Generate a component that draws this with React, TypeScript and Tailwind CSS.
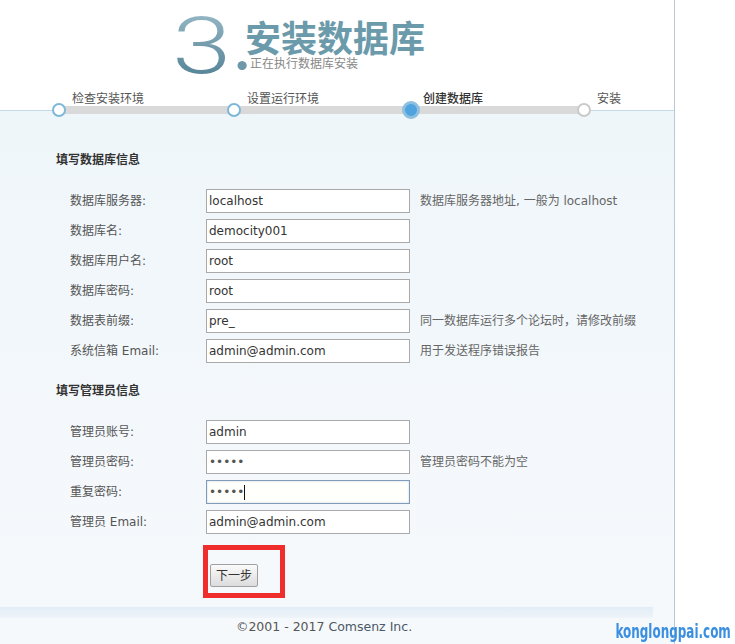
import React from "react";

const FONT = "font-['DejaVu_Sans','Noto_Sans_CJK_SC',sans-serif]";

type Row = { label: string; value: string; hint?: string; type?: "text" | "password" | "focus" };

const dbRows: Row[] = [
  { label: "数据库服务器:", value: "localhost", hint: "数据库服务器地址, 一般为 localhost" },
  { label: "数据库名:", value: "democity001" },
  { label: "数据库用户名:", value: "root" },
  { label: "数据库密码:", value: "root" },
  { label: "数据表前缀:", value: "pre_", hint: "同一数据库运行多个论坛时，请修改前缀" },
  { label: "系统信箱 Email:", value: "admin@admin.com", hint: "用于发送程序错误报告" },
];

const adminRows: Row[] = [
  { label: "管理员账号:", value: "admin" },
  { label: "管理员密码:", value: "•••••", hint: "管理员密码不能为空" },
  { label: "重复密码:", value: "•••••", type: "focus" },
  { label: "管理员 Email:", value: "admin@admin.com" },
];

function FormRow({ row }: { row: Row }) {
  const focused = row.type === "focus";
  return (
    <div className="flex items-start h-[30px]">
      <div className="w-[206px] pl-[70px] text-[12px] leading-[24px] text-[#555]">{row.label}</div>
      <div
        className={
          "w-[204px] h-[24px] border flex items-center pl-[2px] text-[12px] text-[#333] " +
          (focused
            ? "border-[#7f9dbb] shadow-[inset_0_0_2px_rgba(120,150,185,0.5)] bg-[#fffffb]"
            : "border-[#a9a9a9] bg-white")
        }
      >
        <span className={row.value.startsWith("•") ? "text-[#555]" : ""}>{row.value}</span>
        {focused && <span className="w-[1px] h-[15px] bg-[#111]" />}
      </div>
      {row.hint && <div className="ml-[10px] text-[12px] leading-[24px] text-[#666]">{row.hint}</div>}
    </div>
  );
}

function Step({
  label,
  width,
  kind,
}: {
  label: string;
  width: string;
  kind: "done" | "active" | "todo";
}) {
  return (
    <div className={"flex items-end " + width}>
      {kind === "active" ? (
        <div className="w-[18px] h-[18px] rounded-full border-[3px] border-[#8cc0de] bg-[#4fa3df] translate-y-[9px] shrink-0" />
      ) : kind === "done" ? (
        <div className="w-[14px] h-[14px] rounded-full border-2 border-[#7fb7d9] bg-white translate-y-[7px] shrink-0" />
      ) : (
        <div className="w-[14px] h-[14px] rounded-full border-2 border-[#cacaca] bg-white translate-y-[7px] shrink-0" />
      )}
      <div
        className={
          "mb-[3px] text-[12px] leading-[16px] whitespace-nowrap " +
          (kind === "active" ? "ml-[3px] text-[#333] font-medium" : "ml-[6px] text-[#555]")
        }
      >
        {label}
      </div>
    </div>
  );
}

export default function App() {
  return (
    <div className={"relative w-[735px] h-[644px] bg-white overflow-hidden " + FONT}>
      <div className="w-[675px] h-[644px] border-r border-[#b7cad6] flex flex-col">
        {/* header */}
        <div className="h-[111px] border-b border-[#c2d9e7] bg-white flex flex-col">
          <div className="h-[88px] flex pl-[172px]">
            <span className="w-[63px] pt-[2px] text-[80px] leading-[88px] font-light font-['Roboto',sans-serif] origin-left scale-x-[1.34] bg-gradient-to-b from-[#a2c1cd] to-[#4a7b90] bg-clip-text text-transparent">
              3
            </span>
            <span className="w-[10px] pt-[17px] text-[60px] leading-[60px] font-bold font-['Lato',sans-serif] text-[#6f97aa]">
              .
            </span>
            <div className="flex flex-col pt-[17px]">
              <div className="text-[36px] leading-[38px] font-bold font-['Noto_Sans_CJK_SC',sans-serif] text-[#6b9aab]">
                安装数据库
              </div>
              <div className="pl-[5px] mt-[1px] text-[12px] leading-[16px] text-[#888]">正在执行数据库安装</div>
            </div>
          </div>
          <div className="relative z-10 h-[22px]">
            <div className="absolute left-[59px] top-[18px] w-[525px] h-[8px] bg-[#d9d9d9]" />
            <div className="relative flex pl-[52px] h-full">
              <Step label="检查安装环境" width="w-[175px]" kind="done" />
              <Step label="设置运行环境" width="w-[175px]" kind="done" />
              <Step label="创建数据库" width="w-[175px]" kind="active" />
              <Step label="安装" width="w-[60px]" kind="todo" />
            </div>
          </div>
        </div>

        {/* form */}
        <div className="bg-gradient-to-b from-[#eff6fa] to-[#f6f9fc] pt-[39px]">
          <div className="pl-[56px] text-[12px] leading-[20px] font-bold text-[#333]">填写数据库信息</div>
          <div className="mt-[19px] flex flex-col">
            {dbRows.map((r) => (
              <FormRow key={r.label} row={r} />
            ))}
          </div>
          <div className="mt-[12px] pl-[56px] text-[12px] leading-[20px] font-bold text-[#333]">填写管理员信息</div>
          <div className="mt-[19px] flex flex-col">
            {adminRows.map((r) => (
              <FormRow key={r.label} row={r} />
            ))}
          </div>
          <div className="mt-[5px] pl-[203px] pb-[9px]">
            <div className="w-[82px] h-[53px] border-[5px] border-[#ef2d2d]">
              <button className="ml-[2px] mt-[14px] w-[48px] h-[23px] border border-[#a0a0a0] rounded-[2px] bg-gradient-to-b from-[#fbfbfb] to-[#dcdcdc] text-[12px] leading-[16px] text-[#333]">
                下一步
              </button>
            </div>
          </div>
        </div>

        {/* footer */}
        <div className="flex-1 bg-[#f6f9fc] flex flex-col">
          <div className="w-[653px] h-[11px] bg-gradient-to-b from-[#e3edf6] to-[#eef4f9]" />
          <div className="w-[648px] pt-[1px] text-center text-[12.5px] leading-[16px] text-[#555]">
            ©2001 - 2017 <span className="text-[#4a5868]">Comsenz Inc.</span>
          </div>
        </div>
      </div>

      <div className="absolute right-[4px] bottom-[3px] origin-right scale-x-[0.7] text-[19px] leading-[20px] font-bold font-['DejaVu_Sans_Condensed','DejaVu_Sans',sans-serif] text-[#3a8fe0] whitespace-nowrap">
        konglongpai.com
      </div>
    </div>
  );
}
